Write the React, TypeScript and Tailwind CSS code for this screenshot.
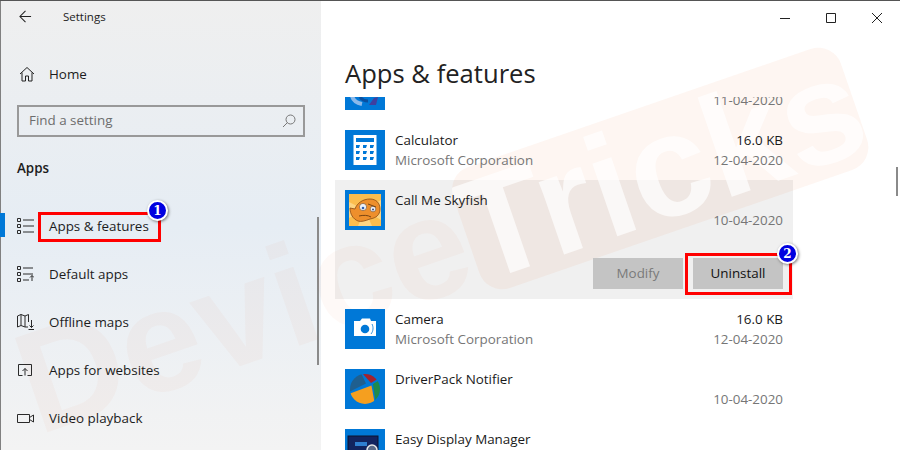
import { ReactNode } from "react";

const FONT = "font-['Open_Sans','Noto_Sans',sans-serif]";

function NavIcon({ name }: { name: string }) {
  const common = { width: 17, height: 18, viewBox: "0 0 17 18", fill: "none", stroke: "#2a2a2a", strokeWidth: 1 };
  if (name === "list")
    return (
      <svg {...common}>
        <path d="M.5 1.500h3v3h-3zM.5 7.500h3v3h-3zM.5 13.500h3v3h-3zM6 3h11M6 9h11M6 15h11" />
      </svg>
    );
  if (name === "default")
    return (
      <svg {...common}>
        <path d="M.5 1.500h3v3h-3zM.5 7.500h3v3h-3zM.5 13.500h3v3h-3zM6 3h10M6 9h10M6 15h6M15 16v-5.500M13 12.500l2-2 2 2" />
      </svg>
    );
  if (name === "map")
    return (
      <svg {...common}>
        <path d="M.5 3v11l3.500-1.500 4 1.500h3M.5 3L4 1.500 8 3l3.500-1.500V9M4 1.500v11M8 3v11M14.500 7v7.500M12.500 12.500l2 2 2-2M11.500 16.500H17" />
      </svg>
    );
  if (name === "web")
    return (
      <svg {...common}>
        <path d="M5.500 14.500h-4v-11h13v11h-4M8 14.500v-7M5.500 10L8 7.500l2.500 2.500" />
      </svg>
    );
  return (
    <svg {...common}>
      <path d="M.5 5.500h12v8H.5zM12.500 8.500l4-2.500v7l-4-2.500" />
    </svg>
  );
}

function NavRow({ icon, label }: { icon: string; label: string }) {
  return (
    <div className="relative z-[2] flex h-12 items-center pl-4">
      <div className="w-8 shrink-0">
        <NavIcon name={icon} />
      </div>
      <span className="text-[13.4px] text-[#1c1c1c]">{label}</span>
    </div>
  );
}

function Tile({ children }: { children: ReactNode }) {
  return <div className="h-10 w-10 shrink-0 overflow-hidden bg-[#0078d7]">{children}</div>;
}

function AppRow({
  icon,
  name,
  publisher,
  size,
  date,
}: {
  icon: ReactNode;
  name: string;
  publisher?: string;
  size?: string;
  date: string;
}) {
  return (
    <div className="relative z-[2] flex h-[60px] px-[10px] pt-[10px]">
      <Tile>{icon}</Tile>
      <div className="ml-[10px] flex-1 text-[13.4px] leading-5">
        <div className="text-[#1a1a1a]">{name}</div>
        <div className="text-[#767676]">{publisher}</div>
      </div>
      <div className="text-right text-[13.4px] leading-5">
        <div className="h-5 text-[#1a1a1a]">{size}</div>
        <div className="text-[#767676]">{date}</div>
      </div>
    </div>
  );
}

const CalcIcon = (
  <svg viewBox="0 0 40 40" className="h-10 w-10">
    <rect x="8.5" y="5" width="23" height="30" fill="#fff" />
    <rect x="11" y="8" width="18" height="4" fill="#0078d7" />
    {[15, 21, 27].map((y) =>
      [11, 18, 25].map((x) => <path key={`${x}-${y}`} d={`M${x} ${y}h4l-1 3h-3z`} fill="#0078d7" />),
    )}
  </svg>
);

const FishIcon = (
  <svg viewBox="0 0 40 40" className="h-10 w-10">
    <rect x="4" y="4" width="32" height="32" fill="#fbbd4e" />
    <path d="M20 20L4 12v16zM20 20l16-10v20zM20 20l-7 16h14z" fill="#fdd583" />
    <path d="M5 18l5 1c2-6 8-10 15-10 6 0 10 4 10 10 0 6-4 9-10 10-5 2-9 3-12 2-5-2-8-7-8-13z" fill="#ee8f2c" stroke="#8a4a14" strokeWidth="0.8" />
    <circle cx="18" cy="17" r="3.6" fill="#eef2fa" stroke="#6a4a30" strokeWidth="0.6" />
    <circle cx="28" cy="19" r="2.8" fill="#eef2fa" stroke="#6a4a30" strokeWidth="0.6" />
    <circle cx="18" cy="18" r="1.300" fill="#2f5fb0" />
    <circle cx="28" cy="19.500" r="1" fill="#3a4a7a" />
    <path d="M14 26c4-1 9-1 12 1M23 14l8 3" stroke="#6a3a10" strokeWidth="0.9" fill="none" />
  </svg>
);

const CameraIcon = (
  <svg viewBox="0 0 40 40" className="h-10 w-10">
    <path d="M9 12h6l2-2.500h8l1 2.500h5v15H9z" fill="#fff" />
    <circle cx="20" cy="20" r="4.300" fill="#0078d7" />
    <path d="M27 15c1.500 3 1.500 7-1 10" stroke="#0078d7" strokeWidth="0.8" fill="none" />
  </svg>
);

const DriverPackIcon = (
  <svg viewBox="0 0 40 40" className="h-10 w-10">
    <defs>
      <clipPath id="dp-ball">
        <circle cx="20" cy="20" r="15" />
      </clipPath>
    </defs>
    <g clipPath="url(#dp-ball)">
      <path d="M4 25L26.500 16.500 30 36H4z" fill="#f59f1f" />
      <path d="M4 23V4h12l5 10.500z" fill="#1f5f8f" />
      <path d="M17 4h19v4l-10 6z" fill="#a3232f" />
      <path d="M28 15l8-5v26h-5z" fill="#1f8a4a" />
    </g>
  </svg>
);

const ClippedTop = (
  <svg viewBox="0 0 40 40" className="h-10 w-10">
    <path d="M7 26c1 4 5 7 10 8" stroke="#8ab8ea" strokeWidth="4" fill="none" />
    <path d="M15 27c2 3 4 4 8 4" stroke="#0a4fa0" strokeWidth="3" fill="none" />
    <path d="M33 27l-4 1-5 7h7z" fill="#3f3f9f" />
  </svg>
);

const DisplayIcon = (
  <svg viewBox="0 0 40 40" className="h-10 w-10">
    <rect x="3" y="7" width="30" height="24" fill="#12245f" stroke="#0d1330" />
    <rect x="10" y="13" width="12" height="4" fill="#2f7fd0" />
    <circle cx="27" cy="21" r="5" fill="#5a6a88" stroke="#e8e8e8" strokeWidth="1.500" />
  </svg>
);

function Badge({ n, className }: { n: number; className: string }) {
  return (
    <div
      className={`absolute z-[3] flex h-[21px] w-[21px] items-center justify-center rounded-full border-2 border-white bg-[#0000e0] font-['DejaVu_Serif',serif] text-[12px] font-bold text-white shadow-[1px_1px_3px_rgba(0,0,0,0.5)] ${className}`}
    >
      {n}
    </div>
  );
}

export default function App() {
  return (
    <div className={`relative flex h-[450px] w-[900px] overflow-hidden border-t border-t-[#555] bg-white ${FONT}`}>
      <aside className="relative flex w-[321px] shrink-0 flex-col border-l border-l-[#808080] bg-linear-to-b from-[#efefef] via-[#e6edf4] via-50% to-[#f3f3f3]">
        <div className="relative z-[2] flex h-[31px] items-center pl-[18px]">
          <svg width="13" height="13" viewBox="0 0 14 14" fill="none" stroke="#222" strokeWidth="1.1">
            <path d="M13 7H1M7 1L1 7l6 6" />
          </svg>
          <span className="ml-[31px] text-[11.5px] text-[#222]">Settings</span>
        </div>
        <div className="relative z-[2] mt-[18px] flex h-[48px] items-center pl-[18px]">
          <svg width="16" height="16" viewBox="0 0 16 16" fill="none" stroke="#222" strokeWidth="1">
            <path d="M1 8l7-6.500L15 8M3 6.500V15h3.500v-5h3v5H13V6.500" />
          </svg>
          <span className="ml-[14px] text-[13.4px] text-[#1c1c1c]">Home</span>
        </div>
        <div className="relative z-[2] ml-4 mt-[7px] flex h-8 w-[288px] items-center justify-between border-2 border-[#999] pl-[10px] pr-[7px] text-[13.4px] text-[#6d6d6d]">
          <span className="mb-[2px]">Find a setting</span>
          <svg width="14" height="14" viewBox="0 0 14 14" fill="none" stroke="#777" strokeWidth="1">
            <circle cx="8.500" cy="5.500" r="4.500" />
            <path d="M5.500 8.500L1 13" />
          </svg>
        </div>
        <div className="relative z-[2] ml-4 mt-[21px] text-[13.4px] font-semibold leading-5 text-[#1c1c1c]">Apps</div>
        <div className="mt-[24px]">
          <NavRow icon="list" label="Apps & features" />
          <NavRow icon="default" label="Default apps" />
          <NavRow icon="map" label="Offline maps" />
          <NavRow icon="web" label="Apps for websites" />
          <NavRow icon="video" label="Video playback" />
        </div>
        <div className="absolute left-[-1px] top-[212px] h-6 w-[5px] bg-[#0078d7]" />
        <div className="absolute left-[316px] top-[216px] h-[148px] w-[2px] bg-[#8a8a8a]" />
      </aside>

      <main className="relative flex-1">
        <div className="relative z-[2] flex h-[33px] items-center justify-end">
          <svg width="102" height="12" viewBox="0 0 102 12" fill="none" stroke="#222" strokeWidth="1" className="mr-[18px]">
            <path d="M0 6.500h10M46.500 1.500h9v9h-9zM92 1l10 10M102 1L92 11" />
          </svg>
        </div>
        <h1 className="relative z-[2] ml-6 mt-[20px] text-[25.6px] leading-10 text-[#222]">Apps &amp; features</h1>
        <div className="ml-[14px] mt-[3px] h-[353px] w-[458px] overflow-hidden">
          <div className="-mt-[37px]">
            <AppRow icon={ClippedTop} name="" date="11-04-2020" />
            <AppRow icon={CalcIcon} name="Calculator" publisher="Microsoft Corporation" size="16.0 KB" date="12-04-2020" />
            <div className="h-[119px] bg-[#f0f0f0]">
              <AppRow icon={FishIcon} name="Call Me Skyfish" date="10-04-2020" />
              <div className="relative z-[2] mt-[18px] flex justify-end gap-[10px] pr-[10px]">
                <div className="flex h-[31px] w-[90px] items-center justify-center bg-[#c4c4c4] text-[13.4px] text-[#7a7a7a]">Modify</div>
                <div className="flex h-[31px] w-[90px] items-center justify-center bg-[#c4c4c4] text-[13.4px] text-[#111]">Uninstall</div>
              </div>
            </div>
            <AppRow icon={CameraIcon} name="Camera" publisher="Microsoft Corporation" size="16.0 KB" date="12-04-2020" />
            <AppRow icon={DriverPackIcon} name="DriverPack Notifier" date="10-04-2020" />
            <AppRow icon={DisplayIcon} name="Easy Display Manager" date="" />
          </div>
        </div>
        <div className="absolute right-[2px] top-[166px] h-[29px] w-[2px] bg-[#8a8a8a]" />
      </main>

      {/* watermark, sits between the panel backgrounds and their content */}
      <div className="pointer-events-none absolute left-[-2px] top-[180px] z-[1] flex h-[128px] w-[880px] rotate-[-19deg] items-center font-['Liberation_Sans',sans-serif] text-[145px] font-bold leading-none">
        <span className="w-[470px] shrink-0 text-[#e8622a]/4">Device</span>
        <div className="flex h-[128px] w-[410px] shrink-0 items-center justify-center overflow-hidden rounded-[24px] bg-[#e8622a]/6 text-white/70">Tricks</div>
      </div>

      {/* annotations */}
      <div className="absolute left-[38px] top-[211px] z-[3] h-[30px] w-[123px] border-[3px] border-[#f00]" />
      <Badge n={1} className="left-[147px] top-[199px]" />
      <div className="absolute left-[685px] top-[252px] z-[3] h-[42px] w-[107px] border-[3px] border-[#f00]" />
      <Badge n={2} className="left-[777px] top-[242px]" />
    </div>
  );
}
